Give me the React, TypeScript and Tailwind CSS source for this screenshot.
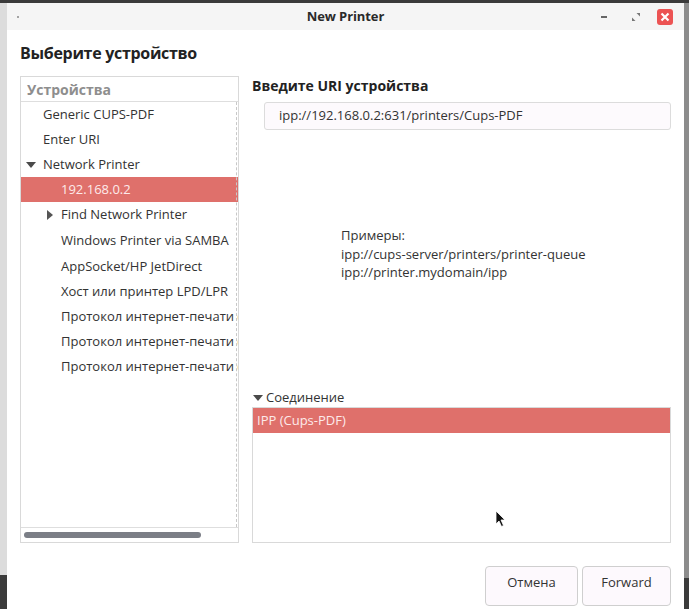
import React from "react";

const devices = [
  { label: "Generic CUPS-PDF", level: 0 },
  { label: "Enter URI", level: 0 },
  { label: "Network Printer", level: 0, expand: "open" },
  { label: "192.168.0.2", level: 1, selected: true },
  { label: "Find Network Printer", level: 1, expand: "closed" },
  { label: "Windows Printer via SAMBA", level: 1, tall: true },
  { label: "AppSocket/HP JetDirect", level: 1, tall: true },
  { label: "Хост или принтер LPD/LPR", level: 1 },
  { label: "Протокол интернет-печати (IPP)", level: 1 },
  { label: "Протокол интернет-печати (IPPS)", level: 1 },
  { label: "Протокол интернет-печати (HTTP)", level: 1 },
];

const DownTri = () => (
  <svg width="10" height="6" viewBox="0 0 10 6" className="shrink-0">
    <path d="M0 0 L10 0 L5 6 Z" fill="#4a4a4a" />
  </svg>
);

const RightTri = () => (
  <svg width="6" height="10" viewBox="0 0 6 10" className="shrink-0">
    <path d="M0 0 L6 5 L0 10 Z" fill="#555" />
  </svg>
);

export default function App() {
  return (
    <div
      className="w-[689px] h-[609px] overflow-hidden flex bg-[#3b3b3b] pt-[3px]"
      style={{ fontFamily: '"Open Sans", "Noto Sans", sans-serif' }}
    >
      {/* desktop strip on the left */}
      <div className="w-[7px] h-[572px] bg-[#dcdcdc] shrink-0" />

      {/* the dialog window */}
      <div className="w-[677px] shrink-0 flex flex-col bg-white">
        {/* title bar */}
        <div className="h-[27px] bg-[#f5f5f5] flex items-center px-[9px]">
          <div className="w-[80px] flex">
            <div className="w-[2px] h-[2px] rounded-full bg-[#888] ml-[1px]" />
          </div>
          <div className="flex-1 text-center text-[13px] font-bold text-[#2a2a2a] tracking-[-0.1px]">
            New Printer
          </div>
          <div className="w-[80px] flex items-center justify-end">
            <div className="w-[6px] h-[2px] bg-[#666] mr-[25px]" />
            <svg width="8" height="8" viewBox="0 0 8 8" className="mr-[17px]">
              <path d="M8 0 L4.5 0 L8 3.5 Z" fill="#777" />
              <path d="M0 8 L3.5 8 L0 4.5 Z" fill="#777" />
            </svg>
            <div className="w-[16px] h-[16px] rounded-[3px] bg-[#ec5353] flex items-center justify-center mr-[2px]">
              <svg width="10" height="10" viewBox="0 0 10 10">
                <path d="M1.5 1.5 L8.5 8.5 M8.5 1.5 L1.5 8.5" stroke="#fff" strokeWidth="2.2" />
              </svg>
            </div>
          </div>
        </div>

        {/* content */}
        <div className="flex-1 flex flex-col px-[13px] pt-[12px] text-[13px] text-[#333]">
          <h1 className="text-[16px] font-bold text-[#222] leading-[22px] tracking-[-0.3px]">
            Выберите устройство
          </h1>

          <div className="flex gap-[13px] mt-[12px] h-[467px]">
            {/* devices panel */}
            <div className="w-[219px] border border-[#d9d9d9] flex flex-col">
              <div className="h-[25px] border-b border-[#dedede] flex items-center px-[6px] text-[14px] font-bold text-[#8e8e8e]">
                Устройства
              </div>
              <div className="flex-1 relative overflow-hidden">
                <div className="absolute top-0 bottom-0 left-[215px] border-r border-dashed border-[#c8c8c8]" />
                {devices.map((d) => (
                  <div
                    key={d.label}
                    className={
                      (d.tall ? "h-[26px] pt-[1px] " : "h-[25px] ") +
                      "flex items-center whitespace-nowrap " +
                      (d.selected ? "bg-[#df706b] text-[#fdeaea]" : "")
                    }
                  >
                    <div
                      className={
                        d.level === 0
                          ? "w-[22px] pl-[5px] flex shrink-0"
                          : "w-[40px] pl-[26px] flex shrink-0"
                      }
                    >
                      {d.expand === "open" && <DownTri />}
                      {d.expand === "closed" && <RightTri />}
                    </div>
                    <span className="shrink-0">{d.label}</span>
                  </div>
                ))}
              </div>
              <div className="h-[15px] border-t border-[#dedede] flex items-center px-[3px]">
                <div className="w-[177px] h-[6px] rounded-full bg-[#7b7e86]" />
              </div>
            </div>

            {/* right side */}
            <div className="flex-1 flex flex-col">
              <div className="text-[14px] font-bold text-[#222] leading-[18px] mt-[1px]">
                Введите URI устройства
              </div>
              <div className="ml-[12px] mt-[7px] h-[28px] border border-[#dcdcdc] rounded-[3px] bg-[#fdfafd] flex items-center px-[14px]">
                ipp://192.168.0.2:631/printers/Cups-PDF
              </div>
              <div className="flex-1 flex items-center pl-[89px]">
                <div className="leading-[18.5px] -mt-[10px]">
                  <div>Примеры:</div>
                  <div>ipp://cups-server/printers/printer-queue</div>
                  <div>ipp://printer.mydomain/ipp</div>
                </div>
              </div>
              <div className="flex items-center gap-[3px] h-[18px] pl-[1px] mt-[1px]">
                <DownTri />
                <span>Соединение</span>
              </div>
              <div className="h-[136px] border border-[#d9d9d9] relative">
                <div className="h-[25px] bg-[#df706b] text-[#fdeaea] flex items-center px-[4px]">
                  IPP (Cups-PDF)
                </div>
                <svg
                  width="12"
                  height="18"
                  viewBox="0 0 12 18"
                  className="absolute left-[242px] top-[102px]"
                >
                  <path d="M1 1 L1 14 L4 11 L6.5 16.5 L8.5 15.5 L6 10 L10 10 Z" fill="#111" stroke="#fff" strokeWidth="0.8" />
                </svg>
              </div>
            </div>
          </div>

          {/* buttons */}
          <div className="flex justify-end gap-[4px] mt-[23px]">
            <button className="w-[93px] h-[40px] border border-[#cfcfcf] rounded-[4px] bg-[#fdf9fd] text-[#333] text-[13px] pb-[6px]">
              Отмена
            </button>
            <button className="w-[89px] h-[40px] border border-[#cfcfcf] rounded-[4px] bg-[#fdf9fd] text-[#333] text-[13px] pb-[6px]">
              Forward
            </button>
          </div>
        </div>
      </div>

      {/* desktop strip on the right */}
      <div className="flex-1 h-[575px] bg-[#8c8c8c]" />
    </div>
  );
}
